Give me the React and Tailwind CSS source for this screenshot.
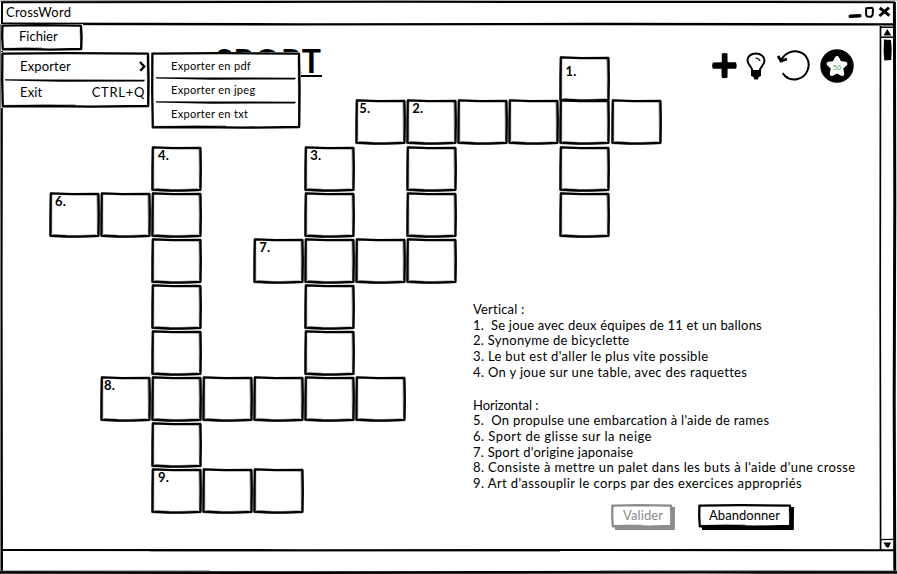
const cells = [
  [11, 1, '1.', 'pl-[6px] pt-[8px]'],
  [7, 2, '5.', 'pl-[4px] pt-[2px]'], [8, 2, '2.', 'pl-[6px] pt-[2px]'], [9, 2], [10, 2], [11, 2], [12, 2],
  [3, 3, '4.', 'pl-[7px] pt-[2px]'], [6, 3, '3.', 'pl-[6px] pt-[2px]'], [8, 3], [11, 3],
  [1, 4, '6.', 'pl-[6px] pt-[2px]'], [2, 4], [3, 4], [6, 4], [8, 4], [11, 4],
  [3, 5], [5, 5, '7.', 'pl-[6px] pt-[2px]'], [6, 5], [7, 5], [8, 5],
  [3, 6], [6, 6],
  [3, 7], [6, 7],
  [2, 8, '8.', 'pl-[4px] pt-[2px]'], [3, 8], [4, 8], [5, 8], [6, 8], [7, 8],
  [3, 9],
  [3, 10, '9.', 'pl-[7px] pt-[2px]'], [4, 10], [5, 10],
];

const clues = [
  ['Vertical :', 'tracking-[0.2px]'],
  ['1.\u00a0 Se joue avec deux équipes de 11 et un ballons', 'tracking-[0.2px]'],
  ['2. Synonyme de bicyclette', 'tracking-[0.28px]'],
  ["3. Le but est d'aller le plus vite possible", 'tracking-[0.34px]'],
  ['4. On y joue sur une table, avec des raquettes', 'tracking-[0.34px]'],
  null,
  ['Horizontal :', 'tracking-[-0.05px]'],
  ["5.\u00a0 On propulse une embarcation à l'aide de rames", 'tracking-[0.26px]'],
  ['6. Sport de glisse sur la neige', 'tracking-[0.47px]'],
  ["7. Sport d'origine japonaise", 'tracking-[0.23px]'],
  ["8. Consiste à mettre un palet dans les buts à l'aide d'une crosse", 'tracking-[0.39px]'],
  ["9. Art d'assouplir le corps par des exercices appropriés", 'tracking-[0.4px]'],
];

function Cell({ col, row, label, pad }) {
  return (
    <div className="relative h-[46px] w-[51px]" style={{ gridColumn: col, gridRow: row }}>
      <svg className="absolute inset-0 overflow-visible" width="51" height="46" viewBox="0 0 51 46" fill="none">
        <path d="M2.8 2 L2.8 42 M48 3 L48.4 42.5 M4 42.6 L25 43.6 L47 42.8" stroke="#8a8a8a" strokeWidth=".9" />
        <path d="M1.4 1.2 L50 1.8 L50.5 24 L49.9 44.6 L32 45.4 L20 45.5 L.8 44.6 L.8 22 Z" stroke="#444" strokeWidth=".9" />
        <path d="M1.8 1.4 L22 2.1 L49.3 1.9 L49.7 22 L49.4 43.8 L30 44.5 L18 44.4 L1.5 43.6 L1.6 22 Z" stroke="#000" strokeWidth="2.2" strokeLinejoin="round" />
      </svg>
      {label && <div className={`relative text-[13px] leading-[14px] font-bold tracking-[0.2px] ${pad}`}>{label}</div>}
    </div>
  );
}

function Frame({ w, h, color = '#000' }) {
  return (
    <svg className="absolute inset-0" width={w} height={h} viewBox={`0 0 ${w} ${h}`} fill="none">
      <path d={`M1.4 1.6 L${w * 0.45} 1.2 L${w - 2} 1.7 L${w - 1.4} ${h * 0.5} L${w - 1.8} ${h - 2} L${w * 0.6} ${h - 1.3} L${w * 0.3} ${h - 2} L1.8 ${h - 1.6} L1.2 ${h * 0.5} Z`} stroke={color} strokeWidth="2.3" strokeLinejoin="round" />
      <path d={`M${w - 2.8} 4 L${w - 2.4} ${h - 3} M3 ${h - 2.6} L${w * 0.5} ${h - 3}`} stroke={color} strokeOpacity=".6" strokeWidth="1" />
    </svg>
  );
}

function Divider({ w }) {
  return (
    <svg className="block" width={w} height="3" viewBox={`0 0 ${w} 3`}>
      <path d={`M0 .2 L${w * 0.3} .5 L${w} .7 L${w - 1} 2.5 L${w * 0.4} 2.7 L0 1.4 Z`} />
    </svg>
  );
}

export default function App() {
  return (
    <div className="relative flex h-[574px] w-[897px] flex-col overflow-hidden bg-white font-['Lato',sans-serif] text-[13px] text-black">
      <header className="flex h-[26px] shrink-0 items-center justify-between pr-[6px] pl-[6px]">
        <span className="text-[13px] tracking-[0.25px]">CrossWord</span>
        <svg width="44" height="14" viewBox="0 0 44 14" fill="none" stroke="#000">
          <path d="M3.3 10.3 L12.8 9.8" strokeWidth="3.6" strokeLinecap="round" />
          <path d="M19.2 2.2 L25 1.7 L26 3.5 L25.6 9 L24 10.8 L20 10.4 L19 8.6 Z" strokeWidth="2" strokeLinejoin="round" />
          <path d="M32.8 2 L42.5 9.6 M42 1.6 L32.4 10" strokeWidth="2.9" />
        </svg>
      </header>

      <div className="flex h-[523px] shrink-0">
        <main className="grid w-[880px] grid-cols-1 grid-rows-1">
          <h1 className="col-start-1 row-start-1 mt-[17px] ml-[215px] h-[34px] w-[107px] border-b-2 border-black text-[32px] leading-[36px] font-bold tracking-[0.9px] whitespace-nowrap">SPORT</h1>

          <div className="z-10 col-start-1 row-start-1 mt-[30px] ml-[49px] grid grid-cols-[repeat(12,51.05px)] grid-rows-[43.3px_46.7px_repeat(8,46px)] content-start justify-start">
            {cells.map(([c, r, label, pad]) => <Cell key={`${c}-${r}`} col={c} row={r} label={label} pad={pad} />)}
          </div>

          <div className="z-10 col-start-1 row-start-1 mt-[23px] mr-[26px] flex items-center self-start justify-self-end">
            <svg width="28" height="32" viewBox="0 0 28 32">
              <path d="M10.8 3.6 Q13.5 2.5 16.5 3.6 L16.6 12.2 L25 12.2 Q26.4 15.5 25 18.8 L16.6 18.8 L16.5 27.6 Q13.5 28.7 10.6 27.6 L10.5 18.8 L1.8 18.8 Q.4 15.6 1.8 12.4 L10.8 12.2 Z" />
            </svg>
            <svg className="ml-[7px]" width="20" height="32" viewBox="0 0 20 32" fill="none" stroke="#000">
              <path d="M6.3 20.5 C6 16.5 1.5 15 1.5 10.5 C1.5 6 5.2 3.6 9.8 3.6 C14.7 3.6 18.5 6.4 18.5 10.6 C18.5 15 14.3 16.5 13.7 20.5" strokeWidth="2" />
              <path d="M9.5 8 Q13 8.2 14.2 11" strokeWidth="1.2" />
              <path d="M5 20 L15 20 L15 26 L12.8 27 L11.8 29.6 L8.4 29.6 L7.5 27 L5 26 Z" fill="#000" stroke="none" />
            </svg>
            <svg className="ml-[10px]" width="36" height="34" viewBox="0 0 36 34" fill="none" stroke="#000">
              <path d="M5.5 10.5 C9.5 3.5 17 1 23.5 3 C31.5 5.5 34.5 14 31.5 21.5 C28 30.5 16.5 33.5 9 27 L6.7 24" strokeWidth="2" />
              <path d="M2 7 L5 12 L11 10" strokeWidth="2.8" />
            </svg>
            <div className="relative ml-[8px] flex size-[34px] items-center justify-center">
              <svg className="absolute inset-0" width="34" height="34" viewBox="0 0 34 34">
                <circle cx="17" cy="17" r="16.7" />
                <path fill="#fff" stroke="#fff" strokeWidth="4" strokeLinejoin="round" d="M17 9 L19.6 14 L25.4 14.8 L21.2 18.8 L22.2 25 L17 22.2 L11.8 25 L12.8 18.8 L8.6 14.8 L14.4 14 Z" />
              </svg>
              <span className="relative mt-[3px] font-['Noto_Sans',sans-serif] text-[7px] leading-none text-[#3fa35f]">50</span>
            </div>
          </div>

          <section className="z-10 col-start-1 row-start-1 mt-[276px] ml-[473px] w-[400px] self-start">
            <div className="text-[13px] leading-[15.65px] whitespace-nowrap">
              {clues.map((clue, i) => clue
                ? <p key={i}><span className={clue[1]}>{clue[0]}</span></p>
                : <div key={i} className="h-[17.4px]" />)}
            </div>
            <div className="mt-[12px] ml-[138px] flex gap-[23px]">
              <button className="relative h-[26px] w-[64px] pb-[2px] text-left text-[#8a8a8a]">
                <svg className="absolute inset-0" width="64" height="26" viewBox="0 0 64 26" fill="#8c8c8c">
                  <path d="M61 3 L64 3 L63.8 26 L4 26 L4 23 L61 23 Z" />
                </svg>
                <Frame w={62} h={24} color="#8c8c8c" />
                <span className="relative ml-[12px] text-[13px] tracking-[0.1px]">Valider</span>
              </button>
              <button className="relative h-[26px] w-[96px] pb-[2px] text-left">
                <svg className="absolute inset-0" width="96" height="26" viewBox="0 0 96 26">
                  <path d="M92 3 L96 3 L95.8 26 L4 26 L4 23 L92 23 Z" />
                </svg>
                <Frame w={94} h={24} />
                <span className="relative ml-[11px] text-[13px] tracking-[0.05px]">Abandonner</span>
              </button>
            </div>
          </section>
        </main>

        <aside className="flex w-[13px] flex-col items-center justify-between">
          <div className="flex flex-col items-center">
            <svg width="13" height="12" viewBox="0 0 13 12">
              <path d="M7.3 3 L11.3 9.5 L3.5 9.5 Z" /><path d="M0 11.2 L13 11.2" stroke="#000" strokeWidth="1.5" />
            </svg>
            <svg className="mt-[1px] ml-[2px]" width="9" height="22" viewBox="0 0 9 22">
              <path d="M1 .5 L8 1 L8.7 10 L8.2 21 L1.3 21.5 L.6 12 Z" />
            </svg>
          </div>
          <svg width="13" height="12" viewBox="0 0 13 12">
            <path d="M3.5 5.5 L11 5.5 L8.7 10.5 L6.5 10.5 Z" /><path d="M0 2.6 L13 2.4" stroke="#000" strokeWidth="1.4" />
          </svg>
        </aside>
      </div>

      <svg className="pointer-events-none absolute inset-0" width="897" height="574" viewBox="0 0 897 574" fill="none" stroke="#000">
        <path d="M0 1 L160 .7 L160 0 L897 0" stroke="#777" strokeWidth="1" />
        <path d="M1 2.3 L400 1.8 L895 2.2" strokeWidth="2" />
        <path d="M2 23.8 L300 24.4 L600 24 L894 24.4" strokeWidth="2.4" />
        <path d="M2 2 L1.6 290 L2 572" strokeWidth="2" />
        <path d="M.5 24 L.5 574" stroke="#777" />
        <path d="M894.4 2 L894.8 200 L894.2 400 L894.8 572" strokeWidth="3" />
        <path d="M880.5 26 L880.2 300 L880.6 550" strokeWidth="1.7" />
        <path d="M880 27.2 L893 27.2" strokeWidth="1.5" />
        <path d="M1 550 L300 550.2 L600 550 L894 550.3" strokeWidth="2.1" />
        <path d="M150 551.5 L560 551.5" stroke="#888" strokeWidth=".8" />
        <path d="M0 572.3 L300 572.6 L700 572.2 L897 572.4" strokeWidth="2.8" />
        <path d="M0 570.8 L210 570.8 M600 570.8 L897 570.8" stroke="#777" strokeWidth=".8" />
      </svg>

      <div className="absolute top-[24px] left-[1px] z-20 h-[27px] w-[82px] bg-white pt-[2px] pl-[18px] leading-[21px]">
        <Frame w={82} h={27} />
        <span className="relative">Fichier</span>
      </div>

      <div className="absolute top-[52px] left-[1px] z-20 h-[56px] w-[149px] bg-white pl-[19px]">
        <Frame w={149} h={56} />
        <div className="relative flex h-[27px] items-center justify-between pt-[2px] pr-[4px] tracking-[0.15px]">
          <span>Exporter</span>
          <svg width="7" height="11" viewBox="0 0 7 11" fill="none" stroke="#000" strokeWidth="2.3"><path d="M1 1 L5.3 5.6 L1.3 9.8" /></svg>
        </div>
        <div className="relative -ml-[15px]"><Divider w={140} /></div>
        <div className="relative flex h-[21px] items-center justify-between pr-[5px]">
          <span className="tracking-[0.15px]">Exit</span><span className="tracking-[0.7px]">CTRL+Q</span>
        </div>
      </div>

      <div className="absolute top-[52px] left-[151px] z-20 h-[77px] w-[150px] bg-white pl-[20px] text-[11px] tracking-[0.3px]">
        <Frame w={150} h={77} />
        <div className="relative h-[25px] pt-[2px] leading-[24px]">Exporter en pdf</div>
        <div className="relative -ml-[15px]"><Divider w={140} /></div>
        <div className="relative h-[21px] leading-[20px]">Exporter en jpeg</div>
        <div className="relative -ml-[15px]"><Divider w={140} /></div>
        <div className="relative h-[21px] leading-[20px]">Exporter en txt</div>
      </div>
    </div>
  );
}
